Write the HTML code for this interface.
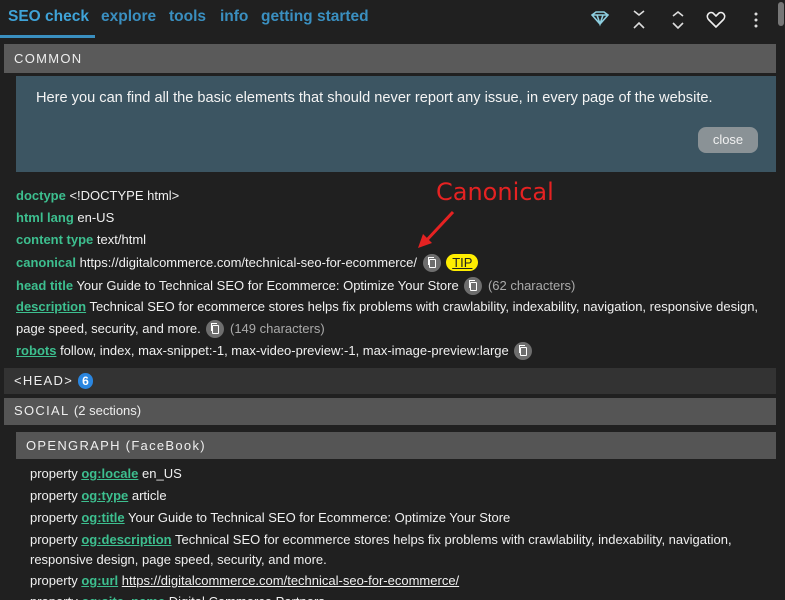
<!DOCTYPE html>
<html style="overflow:hidden;height:600px"><head><style>
*{margin:0;padding:0;box-sizing:border-box}
body{width:785px;height:600px;overflow:hidden;background:#202020;font-family:"Liberation Sans",Arial,sans-serif;color:#f0f0f0;font-size:13px;position:relative}
.a{position:absolute;white-space:nowrap}
.nav{top:8px;font-size:15.5px;font-weight:bold;color:#3a8fc0}
.k{color:#3dbf8f;font-weight:bold}
.u{text-decoration:underline}
.g{color:#aaa}
.bar{position:absolute;left:4px;width:772px;letter-spacing:1.3px;font-size:13px;padding-left:10px;line-height:26px}
.cp{display:inline-block;width:18px;height:18px;border-radius:50%;background:#6e6e6e;vertical-align:-5px;position:relative;margin:0 2px}
.cp:before{content:"";position:absolute;left:6px;top:5px;width:5px;height:7px;border:1.5px solid #fff;border-radius:1px}
.cp:after{content:"";position:absolute;left:5px;top:3px;width:5px;height:7px;border-left:1.5px solid #fff;border-top:1.5px solid #fff}
</style></head><body>
<div class="a nav" style="left:8px;color:#3fa3d8">SEO check</div>
<div class="a nav" style="left:101px">explore</div>
<div class="a nav" style="left:169px">tools</div>
<div class="a nav" style="left:220px">info</div>
<div class="a nav" style="left:261px">getting started</div>
<div class="a" style="left:0;top:35px;width:95px;height:3px;background:#3a8fc0"></div>
<svg class="a" style="left:590px;top:10px" width="180" height="20" viewBox="0 0 180 20" fill="none" stroke-width="1.6">
<path d="M2 5 L6 2 H14 L18 5 L10 14 Z M2 5 H18 M7 5 L10 14 L13 5" stroke="#8ecfe0"/>
<path d="M44 1 L49 5 L54 1 M44 18 L49 13 L54 18" stroke="#ddd"/>
<path d="M83 6 L88 2 L93 6 M83 13 L88 18 L93 13" stroke="#ddd"/>
<path d="M126 17 L119 10 C115 6 119 1 123 3 L126 6 L129 3 C133 1 137 6 133 10 Z" stroke="#eee"/>
<circle cx="166" cy="4" r="1.5" fill="#ddd" stroke="none"/><circle cx="166" cy="10" r="1.5" fill="#ddd" stroke="none"/><circle cx="166" cy="16" r="1.5" fill="#ddd" stroke="none"/>
</svg>
<div class="a" style="left:778px;top:2px;width:6px;height:24px;background:#777;border-radius:3px"></div>
<div class="bar" style="top:44px;height:29px;line-height:29px;background:#5a5a5a;color:#eee">COMMON</div>
<div class="a" style="left:16px;top:76px;width:760px;height:96px;background:#3c5562"></div>
<div class="a" style="left:36px;top:90px;font-size:14.6px;color:#f4f4f4">Here you can find all the basic elements that should never report any issue, in every page of the website.</div>
<div class="a" style="left:698px;top:127px;width:60px;height:26px;border-radius:8px;background:#8a9296;color:#f0f0f0;text-align:center;line-height:26px">close</div>
<div class="a" style="left:16px;top:188px"><span class="k">doctype</span> &lt;!DOCTYPE html&gt;</div>
<div class="a" style="left:16px;top:210px"><span class="k">html lang</span> en-US</div>
<div class="a" style="left:16px;top:232px"><span class="k">content type</span> text/html</div>
<div class="a" style="left:16px;top:254px"><span class="k">canonical</span> https://digitalcommerce.com/technical-seo-for-ecommerce/ <span class="cp"></span> <span style="background:#ffee00;color:#222;border-radius:9px;padding:1px 6px;text-decoration:underline">TIP</span></div>
<div class="a" style="left:16px;top:277px"><span class="k">head title</span> Your Guide to Technical SEO for Ecommerce: Optimize Your Store <span class="cp"></span> <span class="g">(62 characters)</span></div>
<div class="a" style="left:16px;top:299px"><span class="k u">description</span> Technical SEO for ecommerce stores helps fix problems with crawlability, indexability, navigation, responsive design,</div>
<div class="a" style="left:16px;top:320px">page speed, security, and more. <span class="cp"></span> <span class="g">(149 characters)</span></div>
<div class="a" style="left:16px;top:342px"><span class="k u">robots</span> follow, index, max-snippet:-1, max-video-preview:-1, max-image-preview:large <span class="cp"></span></div>
<div class="bar" style="top:368px;height:26px;background:#333;color:#eee">&lt;HEAD&gt; <span style="display:inline-block;background:#2a86e0;color:#fff;border-radius:8px;width:15px;height:16px;line-height:16px;text-align:center;letter-spacing:0;font-weight:bold;font-size:12px">6</span></div>
<div class="bar" style="top:398px;height:27px;background:#555;color:#eee">SOCIAL <span style="letter-spacing:0">(2 sections)</span></div>
<div class="bar" style="top:432px;left:16px;width:760px;height:27px;line-height:27px;background:#555;color:#eee">OPENGRAPH (FaceBook)</div>
<div class="a" style="left:30px;top:466px">property <span class="k u">og:locale</span> en_US</div>
<div class="a" style="left:30px;top:488px">property <span class="k u">og:type</span> article</div>
<div class="a" style="left:30px;top:510px">property <span class="k u">og:title</span> Your Guide to Technical SEO for Ecommerce: Optimize Your Store</div>
<div class="a" style="left:30px;top:532px">property <span class="k u">og:description</span> Technical SEO for ecommerce stores helps fix problems with crawlability, indexability, navigation,</div>
<div class="a" style="left:30px;top:552px">responsive design, page speed, security, and more.</div>
<div class="a" style="left:30px;top:573px">property <span class="k u">og:url</span> <span class="u">https://digitalcommerce.com/technical-seo-for-ecommerce/</span></div>
<div class="a" style="left:30px;top:594px">property <span class="k u">og:site_name</span> Digital Commerce Partners</div>
<div class="a" style="left:436px;top:178px;font-size:24px;color:#e52222;font-family:'DejaVu Sans',sans-serif">Canonical</div>
<svg class="a" style="left:415px;top:208px" width="45" height="42"><path d="M38 4 L10 34" stroke="#e52222" stroke-width="3"/><path d="M3 40 L8 26 L17 35 Z" fill="#e52222"/></svg>
</body></html>
